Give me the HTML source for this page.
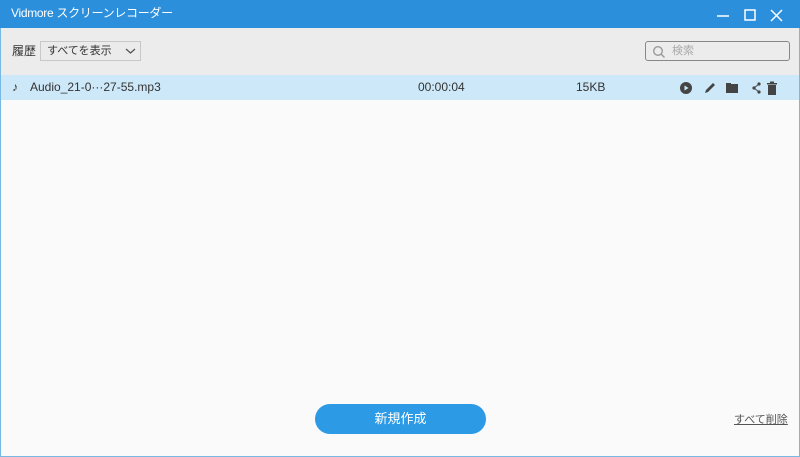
<!DOCTYPE html>
<html><head><meta charset="utf-8"><style>
*{margin:0;padding:0;box-sizing:border-box}
body{width:800px;height:457px;overflow:hidden;font-family:"Liberation Sans","Noto Sans CJK JP",sans-serif;background:#fafafa;position:relative}
.win{position:absolute;left:0;top:0;width:800px;height:457px;border:1px solid #7ab8e4;border-top:none}
.title{position:absolute;left:0;top:0;width:800px;height:28px;background:#2b8fdc;color:#fff;font-size:12px;line-height:27px;padding-left:11px;letter-spacing:-0.3px}
.tool{position:absolute;left:1px;top:28px;width:798px;height:47px;background:#ececec}
.row{position:absolute;left:1px;top:75px;width:798px;height:25px;background:#cde8f8;font-size:12px;color:#333;line-height:25px}
.t{position:absolute;white-space:nowrap}
</style></head><body>
<div class="win"></div>
<div class="title">Vidmore スクリーンレコーダー
<svg style="position:absolute;left:713px;top:8px" width="78" height="14" fill="none" stroke="#fff" stroke-width="1.5">
<line x1="4" y1="8" x2="16" y2="8"/><rect x="32" y="2" width="10" height="10"/><line x1="58" y1="2" x2="69" y2="13"/><line x1="69" y1="2" x2="58" y2="13"/></svg>
</div>
<div class="tool">
<span class="t" style="left:11px;top:14px;font-size:12px;color:#333">履歴</span>
<div style="position:absolute;left:39px;top:13px;width:101px;height:20px;border:1px solid #c8c8c8;background:#ebebeb;font-size:11px;color:#333;line-height:18px;padding-left:6px">すべてを表示
<svg style="position:absolute;right:4px;top:5px" width="11" height="8" fill="none" stroke="#555" stroke-width="1.3"><polyline points="1,2 5.5,6 10,2"/></svg></div>
<div style="position:absolute;left:644px;top:13px;width:145px;height:20px;border:1px solid #888;border-radius:3px;background:#ececec;font-size:11px;color:#aaa;line-height:18px;padding-left:26px">検索
<svg style="position:absolute;left:6px;top:3px" width="14" height="14" fill="none" stroke="#999" stroke-width="1.4"><circle cx="6" cy="6" r="4.3"/><line x1="9" y1="9" x2="12.5" y2="12.5"/></svg></div>
</div>
<div class="row">
<span class="t" style="left:11px">♪</span>
<span class="t" style="left:29px">Audio_21-0···27-55.mp3</span>
<span class="t" style="left:417px">00:00:04</span>
<span class="t" style="left:575px">15KB</span>
<svg style="position:absolute;left:678px;top:6px" width="100" height="14">
<circle cx="7" cy="7" r="6" fill="#444"/><polygon points="5.5,4.5 9.5,7 5.5,9.5" fill="#cde8f8"/>
<path d="M26 12 L27 9 L34 2 L36 4 L29 11 Z" fill="#444"/>
<rect x="47" y="3" width="12" height="9" fill="#444"/><rect x="47" y="2" width="5" height="2" fill="#444"/>
<circle cx="75" cy="7" r="1.6" fill="#444"/><circle cx="80" cy="3" r="1.6" fill="#444"/><circle cx="80" cy="11" r="1.6" fill="#444"/><path d="M75 7 L80 3 M75 7 L80 11" stroke="#444"/>
<rect x="88" y="2" width="10" height="1.5" fill="#444"/><rect x="91" y="0.5" width="4" height="2" fill="#444"/><rect x="89" y="4" width="8" height="10" fill="#444"/>
</svg>
</div>
<div style="position:absolute;left:315px;top:404px;width:171px;height:30px;border-radius:15px;background:#2d9ae6;color:#fff;font-size:13px;text-align:center;line-height:30px">新規作成</div>
<span class="t" style="left:734px;top:411px;font-size:11px;color:#555;text-decoration:underline">すべて削除</span>
</body></html>
